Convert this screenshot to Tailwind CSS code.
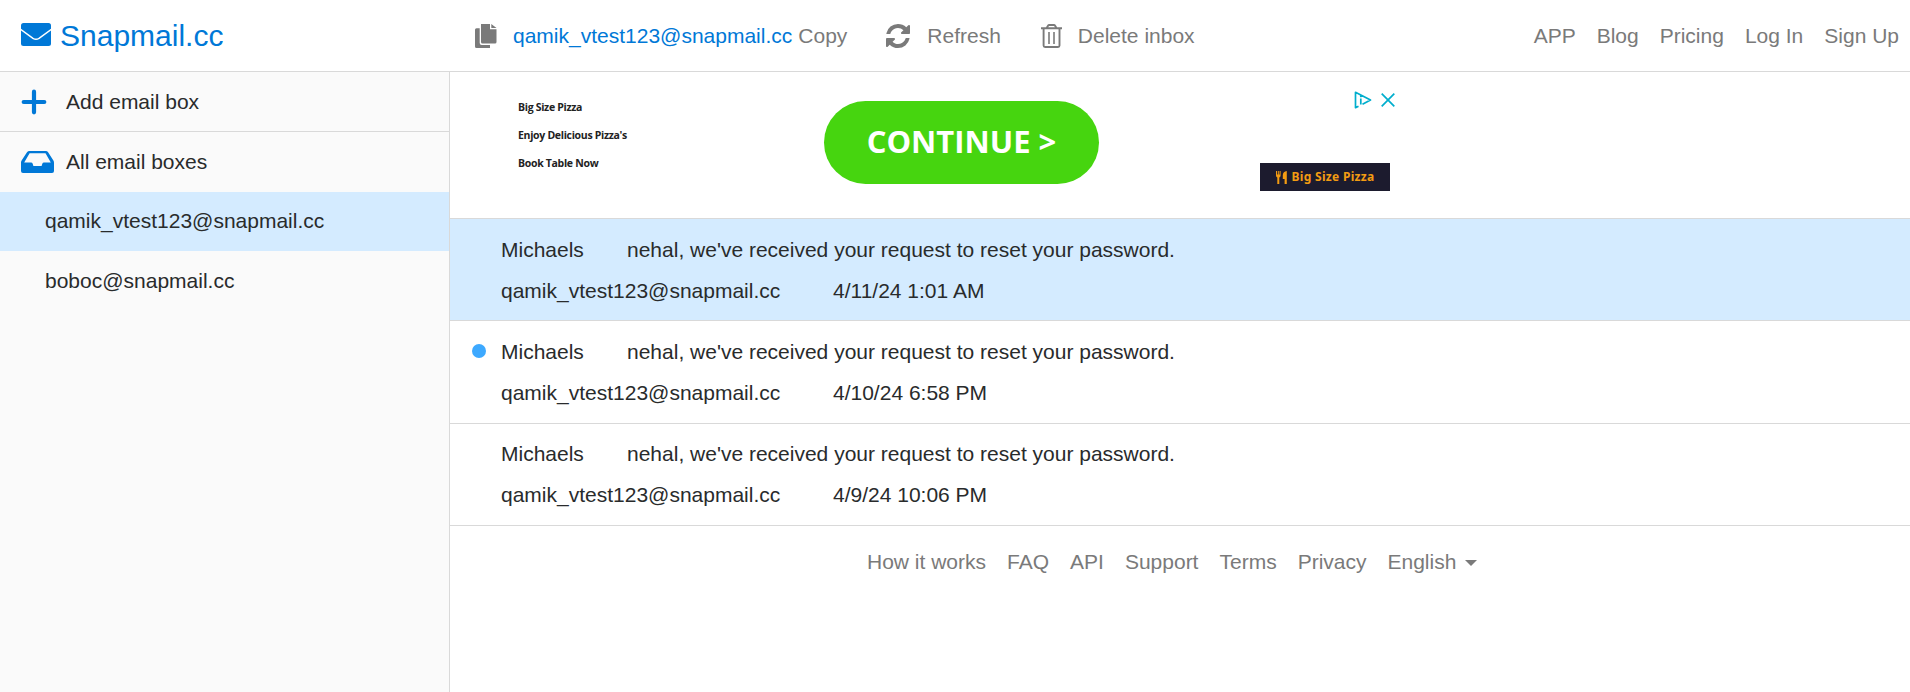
<!DOCTYPE html>
<html lang="en">
<head>
<meta charset="utf-8">
<title>Snapmail.cc</title>
<script src="https://cdn.jsdelivr.net/npm/@tailwindcss/browser@4"></script>
</head>
<body class="h-[692px] overflow-hidden bg-white font-['Liberation_Sans',Arial,sans-serif] text-[21px] leading-[31.5px] text-[#292b2c] whitespace-nowrap flex flex-col">
<header class="flex h-[72px] shrink-0 items-center border-b border-[#d9d9d9] text-[#7a7a7a]">
  <a class="flex w-[450px] items-center pl-[21px] text-[30px] text-[#0078d7]">
    <svg class="mb-[2px] h-[23px] w-[30px]" viewBox="0 0 30 23"><rect width="30" height="23" rx="2.5" fill="#0078d7"/><path d="M-.5 6.300L12 15.300q3 2 6 0L30.500 6.300" fill="none" stroke="#fff" stroke-width="1.500"/></svg>
    <span class="ml-[9px]">Snapmail.cc</span>
  </a>
  <div class="flex flex-1 items-center pl-[25px]">
    <svg class="h-6 w-[22px]" viewBox="0 0 22 24" fill="currentColor"><path d="M6 0H15v5.200h6.500V18a1.500 1.500 0 0 1-1.500 1.500H7.500A1.500 1.500 0 0 1 6 18zM16.300 0l5.200 4.100h-5.200zM4.700 4.300V19a2 2 0 0 0 2 2H15v3H1.500A1.500 1.500 0 0 1 0 22.500V5.800a1.500 1.500 0 0 1 1.500-1.500z"/></svg>
    <span class="ml-[16px] text-[#0078d7]">qamik_vtest123@snapmail.cc</span><span class="ml-[6px]">Copy</span>
    <svg class="ml-[39px] h-6 w-6" viewBox="0 0 1536 1536" fill="currentColor"><path d="M1511 928q0 5-1 7-64 268-268 434.500t-478 166.500q-146 0-282.500-55t-243.500-157l-129 129q-19 19-45 19t-45-19-19-45v-448q0-26 19-45t45-19h448q26 0 45 19t19 45-19 45l-137 137q71 66 161 102t187 36q134 0 250-65t186-179q11-17 53-117 8-23 30-23h192q13 0 22.500 9.500t9.500 22.500zm25-800v448q0 26-19 45t-45 19h-448q-26 0-45-19t-19-45 19-45l138-138q-148-137-349-137-134 0-250 65t-186 179q-11 17-53 117-8 23-30 23h-199q-13 0-22.500-9.500t-9.500-22.500v-7q65-268 270-434.500t480-166.500q146 0 284 55.500t245 156.500l130-129q19-19 45-19t45 19 19 45z"/></svg>
    <span class="ml-[17px]">Refresh</span>
    <svg class="ml-[40px] h-6 w-[21px]" viewBox="0 0 21 24" fill="none" stroke="currentColor" stroke-width="1.900"><path d="M0 4.300h21M2.600 4.300V21.500a1.500 1.500 0 0 0 1.500 1.500H17a1.500 1.500 0 0 0 1.500-1.500V4.300M5.500 4.300L7 1.700Q7.400 1 8.200 1h4.700q.8 0 1.200.7l1.500 2.600"/><path d="M8 8v12M13 8v12" stroke-width="1.600"/></svg>
    <span class="ml-[16px]">Delete inbox</span>
  </div>
  <nav class="flex gap-[21px] pr-[11px]"><a>APP</a><a>Blog</a><a>Pricing</a><a>Log In</a><a>Sign Up</a></nav>
</header>
<div class="flex min-h-0 flex-1">
  <aside class="w-[450px] shrink-0 border-r border-[#d9d9d9] bg-[#fafafa]">
    <div class="flex h-[60px] items-center border-b border-[#d9d9d9] pl-[21px]">
      <svg class="mr-[19px] h-[26px] w-[26px] text-[#0078d7]" viewBox="0 0 26 26" fill="none" stroke="currentColor" stroke-width="4.200" stroke-linecap="round"><path d="M13 2.700v20.600M2.700 13h20.600"/></svg>
      <span>Add email box</span>
    </div>
    <div class="flex h-[60px] items-center pl-[21px]">
      <svg class="mr-[12px] h-[22px] w-[33px] text-[#0078d7]" viewBox="0 0 33 22" fill="currentColor"><path fill-rule="evenodd" d="M8.500 0h16.300q1.500 0 2.300 1.200L32.400 9.500q.6 1 .6 2.200V20a2 2 0 0 1-2 2H2a2 2 0 0 1-2-2v-8.300q0-1.200.6-2.200L6 1.200Q6.900 0 8.500 0zM8.600 2.200L3.200 11.500H10q1.300 0 1.700 1.300l.7 2.200h8.200l.7-2.200q.4-1.300 1.700-1.300h6.800L24.500 2.200z"/></svg>
      <span>All email boxes</span>
    </div>
    <div class="flex h-[59px] items-start bg-[#d4ebff] pl-[45px] pt-[13px]">qamik_vtest123@snapmail.cc</div>
    <div class="flex h-[60px] items-center pl-[45px]">boboc@snapmail.cc</div>
  </aside>
  <main class="flex-1">
    <section class="flex h-[146px]">
      <div class="w-[374px] pl-[68px] pt-[21px] font-['Open_Sans',sans-serif] text-[10.500px] font-bold leading-[28px] tracking-[-0.3px] text-[#222]">
        <p>Big Size Pizza</p><p>Enjoy Delicious Pizza's</p><p>Book Table Now</p>
      </div>
      <div class="mt-[29px] flex h-[83px] w-[275px] items-center justify-center rounded-[42px] bg-[#46d50f] pb-[2px] font-['Open_Sans',sans-serif] text-[31px] font-bold text-white">CONTINUE &gt;</div>
      <div class="ml-[161px] flex w-[135px] flex-col pt-[18px]">
        <div class="flex h-[20px] items-center justify-end gap-[9px] text-[#00aecd]">
          <svg class="h-[18px] w-[18px]" viewBox="0 0 18 18" fill="none" stroke="currentColor" stroke-width="1.700" stroke-linejoin="round"><path d="M4.500 15.200L1.500 16.700V1.300L16.500 9 8.500 13.200M6.800 7.500v6M6.800 4.500v1.700"/></svg>
          <svg class="h-[14px] w-[14px]" viewBox="0 0 14 14" stroke="currentColor" stroke-width="1.700"><path d="M.7.700l12.600 12.600M13.300.7L.7 13.300"/></svg>
        </div>
        <div class="mt-[53px] flex h-[28px] w-[130px] items-center justify-center gap-[5px] bg-[#1c1b2e] font-['Noto_Sans',sans-serif] text-[12px] font-bold text-[#f39c12]">
          <svg class="h-[13px] w-[11px]" viewBox="0 0 11 13" fill="currentColor"><path d="M0 0h1v3.500h.8V0h1v3.500h.8V0h1v4.500Q4.600 6 3.300 6.400V13h-2V6.400Q0 6 0 4.500zM10.800 0v13H8.600V8H6.800V4Q7 .5 10.800 0z"/></svg>
          <span class="tracking-[0.300px]">Big Size Pizza</span>
        </div>
      </div>
    </section>
    <article class="h-[102px] border-t border-[#d9d9d9] bg-[#d4ebff] pl-[51px] pt-[15px]">
      <div class="flex h-[41px]"><span class="w-[126px]">Michaels</span><span>nehal, we've received your request to reset your password.</span></div>
      <div class="flex"><span class="w-[332px]">qamik_vtest123@snapmail.cc</span><span>4/11/24 1:01 AM</span></div>
    </article>
    <article class="h-[103px] border-t border-[#d9d9d9] pl-[22px] pt-[15px]">
      <div class="flex h-[41px]"><i class="mr-[15px] mt-[8px] h-[14px] w-[14px] rounded-full bg-[#3da9ff]"></i><span class="w-[126px]">Michaels</span><span>nehal, we've received your request to reset your password.</span></div>
      <div class="flex pl-[29px]"><span class="w-[332px]">qamik_vtest123@snapmail.cc</span><span>4/10/24 6:58 PM</span></div>
    </article>
    <article class="h-[103px] border-y border-[#d9d9d9] pl-[51px] pt-[14px]">
      <div class="flex h-[41px]"><span class="w-[126px]">Michaels</span><span>nehal, we've received your request to reset your password.</span></div>
      <div class="flex"><span class="w-[332px]">qamik_vtest123@snapmail.cc</span><span>4/9/24 10:06 PM</span></div>
    </article>
    <footer class="flex gap-[21px] pl-[417px] pt-5 text-[#7a7a7a]">
      <a>How it works</a><a>FAQ</a><a>API</a><a>Support</a><a>Terms</a><a>Privacy</a>
      <a class="flex items-center gap-[9px]">English<i class="mt-[3px] border-x-[6px] border-t-[6px] border-x-transparent border-t-[#7a7a7a]"></i></a>
    </footer>
  </main>
</div>
</body>
</html>
